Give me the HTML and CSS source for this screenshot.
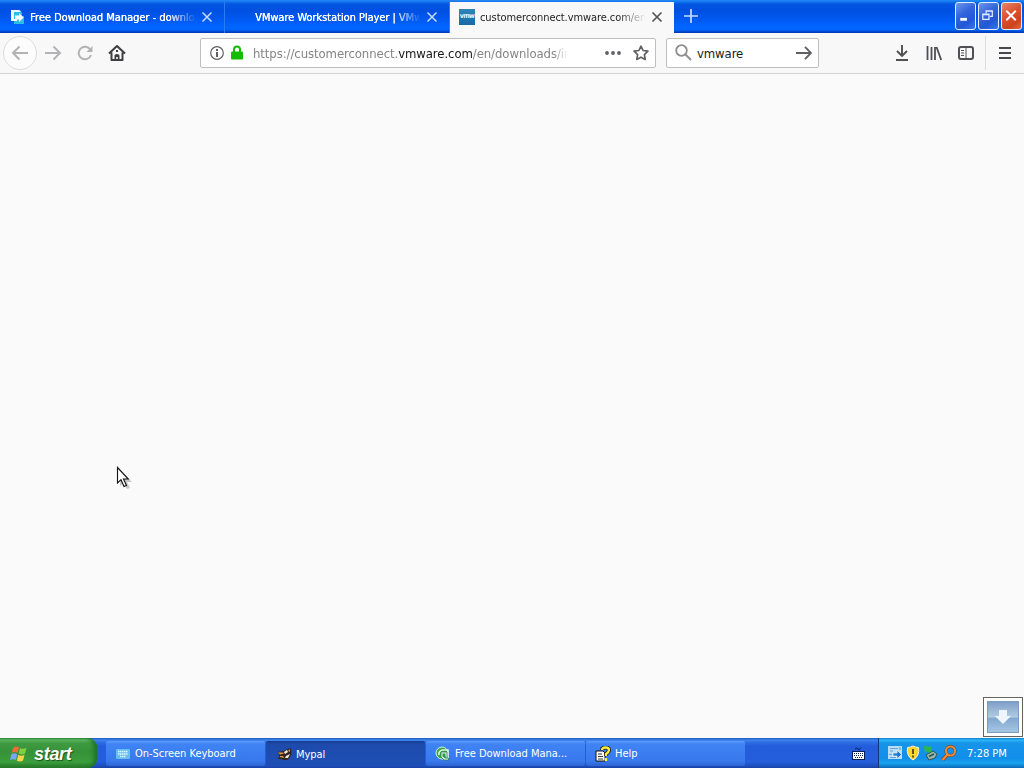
FILE: index.html
```html
<!DOCTYPE html>
<html lang="en">
<head>
<meta charset="utf-8">
<title>customerconnect.vmware.com</title>
<link rel="stylesheet" href="styles.css">
</head>
<body>
<div class="desktop">
  <header class="titlebar">
    <div class="tab">
      <svg class="favicon" width="16" height="16" viewBox="0 0 16 16"><path d="M2 1h9l2 3v3h2v8H5v-3H2z" fill="#2bbfe6"/><path d="M2 1h8l2 2H5v7h3v2H2z" fill="#e9fbff"/><path d="M6 6.500h4V4l4.500 4.500L10 13v-2.500H6z" fill="#fff"/></svg>
      <span class="tab-title t1">Free Download Manager - download</span>
      <svg class="close" width="12" height="12" viewBox="0 0 12 12"><path d="M1.500 1.500l9 9M10.500 1.500l-9 9"/></svg>
    </div>
    <div class="tab">
      <span class="favicon"></span>
      <span class="tab-title t2">VMware Workstation Player | VMware</span>
      <svg class="close" width="12" height="12" viewBox="0 0 12 12"><path d="M1.500 1.500l9 9M10.500 1.500l-9 9"/></svg>
    </div>
    <div class="tab active">
      <span class="favicon vmw">vmw</span>
      <span class="tab-title t3">customerconnect.vmware.com/en/</span>
      <svg class="close" width="12" height="12" viewBox="0 0 12 12"><path d="M1.500 1.500l9 9M10.500 1.500l-9 9"/></svg>
    </div>
    <svg class="newtab" width="14" height="14" viewBox="0 0 14 14"><path d="M7 0v14M0 7h14" stroke="#c5ddff" stroke-width="1.700"/></svg>
    <div class="winbtns">
      <span class="wb"><svg width="20" height="27" viewBox="0 0 20 27"><path d="M4.500 17h7" stroke="#fff" stroke-width="3"/></svg></span>
      <span class="wb"><svg width="20" height="27" viewBox="0 0 20 27" fill="none" stroke="#e4edff" stroke-width="1.300"><path d="M7.500 10.500V8H14v6h-2.500M7.500 8.500H14M4 11.500h6.500V17H4zM4 12h6.500"/></svg></span>
      <span class="wb red"><svg width="20" height="27" viewBox="0 0 20 27"><path d="M4.500 8l10 10M14.500 8l-10 10" stroke="#fff" stroke-width="2"/></svg></span>
    </div>
  </header>

  <nav class="toolbar">
    <span class="back"><svg width="18" height="16" viewBox="0 0 18 16"><path d="M17 8H2M8.500 1.500L2 8l6.500 6.500" fill="none" stroke="#b3b3b5" stroke-width="2"/></svg></span>
    <svg class="fwd" width="18" height="16" viewBox="0 0 18 16"><path d="M1 8h15M9.500 1.500L16 8l-6.500 6.500" fill="none" stroke="#b3b3b5" stroke-width="2"/></svg>
    <svg class="reload" width="16" height="16" viewBox="0 0 16 16"><path d="M13.300 4.500A6.300 6.300 0 1 0 14 10" fill="none" stroke="#b3b3b5" stroke-width="2"/><path d="M15.500 1v6h-6z" fill="#b3b3b5"/></svg>
    <svg class="home" width="18" height="16" viewBox="0 0 18 16"><path d="M1 8.500L9 1l8 7.500M3.500 7.500V15h11V7.500" fill="none" stroke="#3e3e42" stroke-width="2" stroke-linejoin="round"/><path d="M6.500 15v-4.500q0-1.500 2.500-1.500t2.500 1.500V15h-1.700v-3H8.200v3zM8 5h2v2H8z" fill="#3e3e42"/></svg>
    <div class="urlbar">
      <svg class="info" width="14" height="14" viewBox="0 0 14 14"><circle cx="7" cy="7" r="6.300" fill="none" stroke="#606064" stroke-width="1.200"/><path d="M6 3h2v2H6zM6 6h2v5H6z" fill="#606064"/></svg>
      <svg class="lock" width="12" height="15" viewBox="0 0 12 15"><path d="M3 7V4.500a3 3 0 0 1 6 0V7" fill="none" stroke="#12bc00" stroke-width="2"/><rect y="6.500" width="12" height="8" rx="1" fill="#12bc00"/></svg>
      <span class="url">https://customerconnect.<b>vmware.com</b>/en/downloads/in</span>
      <svg class="dots" width="16" height="4" viewBox="0 0 16 4" fill="#606064"><circle cx="2" cy="2" r="1.900"/><circle cx="8" cy="2" r="1.900"/><circle cx="14" cy="2" r="1.900"/></svg>
      <svg class="star" width="16" height="16" viewBox="0 0 16 16"><path d="M8 1.200l2.100 4.300 4.800.7-3.500 3.400.8 4.800L8 12.200l-4.200 2.200.8-4.800L1.100 6.200l4.800-.7z" fill="none" stroke="#606064" stroke-width="1.700" stroke-linejoin="round"/></svg>
    </div>
    <div class="search">
      <svg class="glass" width="17" height="17" viewBox="0 0 17 17"><path d="M10.500 10.500L16 16" stroke="#8e8e91" stroke-width="2"/><circle cx="6.500" cy="6.500" r="5.300" fill="none" stroke="#8e8e91" stroke-width="1.800"/></svg>
      <span class="query">vmware</span>
      <svg width="16" height="14" viewBox="0 0 16 14"><path d="M0 7h15M9 .8L15 7l-6 6.200" fill="none" stroke="#606064" stroke-width="1.900"/></svg>
    </div>
    <div class="tools">
      <svg class="download" width="14" height="16" viewBox="0 0 14 16"><path d="M7 0v11M2 6l5 5 5-5M1 15h12" fill="none" stroke="#505054" stroke-width="1.900"/></svg>
      <svg width="16" height="16" viewBox="0 0 16 16"><path d="M1.500 1v14M5.500 2v13M9 2v13M10.500 2l4.700 13" fill="none" stroke="#505054" stroke-width="1.800"/></svg>
      <svg width="16" height="14" viewBox="0 0 16 14"><rect x="1" y="1" width="14" height="12" rx="2" fill="none" stroke="#505054" stroke-width="2"/><path d="M8 1v12M3 4.500h3M3 7h3M3 9.500h3" stroke="#505054"/></svg>
      <span class="divider"></span>
      <svg width="12" height="12" viewBox="0 0 12 12"><path d="M0 1h12M0 6h12M0 11h12" stroke="#48484c" stroke-width="1.900"/></svg>
    </div>
  </nav>

  <main class="page"></main>

  <footer class="taskbar">
    <div class="start">
      <svg width="19" height="18" viewBox="0 0 19 18"><path d="M3 3q3-2.500 6-.5L7.500 8q-3-2-6 .2z" fill="#ee6a38"/><path d="M10 3q3 1.800 6.500-.2L15 8.500q-3 2-6.300 0z" fill="#80cf42"/><path d="M1.200 9.500q3-2.500 6-.3L5.800 15q-3-1.800-5.800.2z" fill="#79a5f5"/><path d="M8.300 9.700q3 2 6.300 0L13 15.500q-3 2-6.200 0z" fill="#fbd449"/></svg>
      <span class="start-label">start</span>
    </div>
    <div class="tasks">
      <div class="task"><svg width="16" height="16" viewBox="0 0 16 16"><rect x="1" y="3" width="14" height="10" rx="1" fill="#65bdf5"/><path d="M3 5.500h10M3 8h10M5 10.500h6" stroke="#e2faff" stroke-width="1.500" stroke-dasharray="1.500 .5"/></svg><span class="k1">On-Screen Keyboard</span></div>
      <div class="task pressed"><svg width="16" height="16" viewBox="0 0 16 16"><path d="M1 6l5-1 3-1 4-2 1 1 .5 5-2 4-2 2-4 0-3-1-3 0 2-2z" fill="#35261f"/><path d="M1 6.500l5 0 1 1-4 1zM3 10h3l1 2-4-1z" fill="#d99750"/><path d="M7 6l3-2 1 2-3 2zM9 10l4-2-2 4-3 0z" fill="#f4eee1"/><path d="M11 5l2-2v3z" fill="#d99750"/></svg><span class="k2">Mypal</span></div>
      <div class="task"><svg width="16" height="16" viewBox="0 0 16 16"><circle cx="7" cy="7" r="6" fill="#3bab43" stroke="#d3efe0"/><path d="M4 9a4 4 0 0 1 4-5h5v8" fill="none" stroke="#e4f5ea" stroke-width="1.600"/><path d="M6 6h6v5l2 3H9l-3-3z" fill="#e7f4ee" stroke="#258345" stroke-width=".8"/><path d="M7.500 7.500h3v3l2 2H10l-2.500-2z" fill="#289a48"/></svg><span class="k3">Free Download Mana...</span></div>
      <div class="task"><svg width="16" height="16" viewBox="0 0 16 16"><path d="M1 5h7l2 2v8H1z" fill="#fff" stroke="#111"/><path d="M3 8h4M3 10.500h5M3 13h5" stroke="#333"/><path d="M7 4q0-2.500 3.500-2.500T14 4q0 2-3 4v2" fill="none" stroke="#222" stroke-width="4"/><path d="M7 4q0-2.500 3.500-2.500T14 4q0 2-3 4v2M11 12v3" fill="none" stroke="#ffed41" stroke-width="2.300"/></svg><span class="k4">Help</span></div>
    </div>
    <svg class="osk" width="13" height="13" viewBox="0 0 13 13"><path d="M3 2q2-2 3 0t3-1.500" fill="none" stroke="#071d55"/><rect x=".5" y="4.500" width="12" height="8" fill="#fff" stroke="#071d55"/><path d="M2 6.500h9M2 8.500h9M3 10.500h7" stroke="#071d55" stroke-dasharray="1 1"/></svg>
    <div class="tray">
      <svg width="16" height="16" viewBox="0 0 16 16"><path d="M1 1h14v13H1z" fill="#b9ddf7"/><path d="M3 3.500h8M3 6h3M2 9.500h3M3 12.500h6M13 2v3" stroke="#6aa4df" stroke-width="1.200"/><path d="M6 8h4V5l4.500 4.500L10 14v-3H6z" fill="#2873cb" stroke="#e7f6ff" stroke-width=".7"/></svg>
      <svg width="14" height="16" viewBox="0 0 14 16"><path d="M7 1q3 1.500 5.500 1.500Q14 11 7 15 0 11 1.500 2.500 4 2.500 7 1z" fill="#f9d630" stroke="#fff4bd"/><path d="M7 4v5M7 10.500v2" stroke="#4c4010" stroke-width="1.700"/></svg>
      <svg width="15" height="16" viewBox="0 0 15 16"><path d="M1 1l8 1-1 3 2 3-3 1-3-3-2 2z" fill="#2bb844"/><path d="M3 10l7-4 4 3-2 4-6 2z" fill="#9fb4ab" stroke="#2d5655"/><path d="M6 11.500l5-2.500" stroke="#1b584c" stroke-width="1.500"/></svg>
      <svg width="16" height="16" viewBox="0 0 16 16"><circle cx="9.500" cy="6" r="4.500" fill="none" stroke="#713a1a" stroke-width="3"/><path d="M6.500 9.500L1.500 15" stroke="#713a1a" stroke-width="3.500"/><circle cx="9.500" cy="6" r="4.500" fill="none" stroke="#ee8930" stroke-width="2.200"/><path d="M6.500 9.500L1.500 15" stroke="#ee8930" stroke-width="2.500"/></svg>
      <span class="clock">7:28 PM</span>
    </div>
  </footer>

  <div class="floater"><div class="tile"><svg width="18" height="18" viewBox="0 0 18 18"><path d="M5 2h8v6h4l-8 8-8-8h4z" fill="#edf6fd"/></svg></div></div>
  <svg class="cursor" width="20" height="26" viewBox="0 0 20 26"><path d="M4 4v16l4-3 3 6 3-1-3-6h5z" fill="#777" opacity=".4"/><path d="M1.500 1.500v15.500l3.500-3.300 3 6.800 2.500-1.100-3-6.400h4.800z" fill="#fff" stroke="#111" stroke-width="1.100"/></svg>
</div>
</body>
</html>
```

FILE: styles.css
```css
* { box-sizing: border-box; }
body { margin: 0; font-family: "DejaVu Sans Condensed", "DejaVu Sans", sans-serif; font-stretch: condensed; }
svg { display: block; flex: none; }
.desktop { position: relative; width: 1024px; height: 768px; display: flex; flex-direction: column; background: #fafafa; overflow: hidden; }

.titlebar { height: 33px; display: flex; align-items: stretch; background: linear-gradient(#2289f4 0, #1b80f4 1px, #0256e0 4px, #0050e1 10px, #0058ef 19px, #0064ff 26px, #0064fc 30px, #0141c1 32px, #003ab2 33px); }
.tab { width: 225px; padding: 1px 11px 0 9px; display: flex; align-items: center; border-right: 1px solid #2a7cf1; color: #fff; }
.favicon { width: 16px; height: 16px; flex: none; }
.tab-title { width: 166px; margin-left: 5px; font-size: 11px; white-space: nowrap; overflow: hidden; -webkit-mask-image: linear-gradient(90deg, #000 138px, transparent 166px); }
.t1, .t2 { text-shadow: .3px 0 #fff; }
.t1 { letter-spacing: -.02px; }
.t2 { letter-spacing: -.05px; }
.t3 { letter-spacing: -.08px; }
.close { margin-left: 6px; stroke: #c7dcff; stroke-width: 1.5; fill: none; }
.tab.active { width: 224px; margin-top: 2px; padding-top: 0; padding-bottom: 1px; background: #f8f8f9; color: #222; border: 0; }
.active .close { stroke: #555; stroke-width: 1.7; }
.vmw { background: linear-gradient(#2d86b9, #1769a4); color: #e9f4fb; font-size: 7px; line-height: 15px; text-align: center; font-weight: bold; letter-spacing: -.7px; }
.newtab { margin: 9px 0 0 10px; }
.winbtns { margin: 2px 2px 0 auto; display: flex; gap: 2px; }
.wb { width: 21px; height: 28px; border: 1px solid #e5efff; border-radius: 3px; background: linear-gradient(145deg, #7295ed, #3264db 40%, #2258d5 70%, #3675ef); }
.wb svg { width: 19px; height: 26px; }
.red { background: linear-gradient(145deg, #e5866c, #dc5531 40%, #ce421e 75%, #e56541); }

.toolbar { height: 41px; display: flex; align-items: center; border-bottom: 1px solid #d5d5d6; background: #f8f8f9; padding: 0 0 1px 3px; }
.back { width: 34px; height: 34px; border: 1px solid #dcdcdd; border-radius: 50%; display: grid; place-items: center; background: #fcfcfc; }
.fwd { margin-left: 7px; }
.reload { margin-left: 15px; }
.home { margin-left: 15px; }
.urlbar { width: 456px; height: 30px; margin-left: 74px; padding: 0 6px 0 9px; display: flex; align-items: center; border: 1px solid #bfbfc0; border-radius: 2px; background: #fff; }
.lock { margin-left: 7px; }
.url { width: 313px; margin-left: 10px; padding-top: 1px; overflow: hidden; white-space: nowrap; font-size: 13px; letter-spacing: -.08px; color: #858587; -webkit-mask-image: linear-gradient(90deg, #000 300px, transparent 315px); }
.url b { font-weight: normal; color: #161616; }
.dots { margin-left: 39px; }
.star { margin-left: auto; }
.search { width: 153px; height: 30px; margin-left: 10px; padding: 0 6px 0 8px; display: flex; align-items: center; border: 1px solid #bfbfc0; border-radius: 2px; background: #fff; }
.query { flex: 1; margin-left: 5px; padding-top: 1px; font-size: 13px; letter-spacing: -.1px; color: #222; }
.tools { flex: 1; height: 100%; display: flex; align-items: center; justify-content: flex-end; gap: 16px; padding-right: 13px; }
.download { margin-right: 1px; }
.divider { width: 1px; height: 34px; background: #dedee0; margin: 0 -3px 0 -5px; }
.page { flex: 1; background: #fafafa; }

.taskbar { height: 30px; display: flex; color: #fff; background: linear-gradient(#1f55b8 0, #3c86ee 2px, #2f70e4 4px, #235ddb 8px, #245edb 24px, #1d4fbd 28px, #1941a5); }
.start { width: 97px; padding: 1px 0 0 10px; display: flex; align-items: center; gap: 5px; border-radius: 0 9px 9px 0; background: linear-gradient(#35863a 0, #5cb75f 2px, #3f9a43 5px, #369237 14px, #3c9e3d 24px, #287c2b 29px); box-shadow: inset -5px 0 5px -2px #1c6f29; }
.start-label { font: italic bold 18px/20px "Liberation Sans", sans-serif; letter-spacing: -.3px; text-shadow: 1px 1px 1px #1d5323; }
.tasks { margin: 3px 0 0 9px; display: flex; gap: 1px; }
.task { width: 159px; height: 25px; padding: 0 9px; display: flex; align-items: center; gap: 4px; border-radius: 2px; background: linear-gradient(#629bfb, #3f83f4 3px, #3879ed 20px, #2d65d2); font-size: 11px; letter-spacing: -.03px; white-space: nowrap; }
.pressed { padding-left: 11px; padding-top: 1px; gap: 3px; background: linear-gradient(#173a8b, #1c4bac 3px, #1e4fb5); }
.osk { margin: 9px 0 0 auto; }
.tray { width: 146px; margin-left: 13px; padding: 0 0 0 8px; display: flex; align-items: center; gap: 3px; border-left: 1px solid #0e347d; background: linear-gradient(#107fcc 0, #2bb6f5 2px, #1794e9 5px, #118eea 20px, #19a3ee 25px, #0c68bb); }
.clock { margin-left: 7px; font-size: 11px; white-space: nowrap; }

.floater { position: absolute; left: 983px; top: 697px; width: 40px; height: 40px; padding: 3px; border: 1px solid #67625c; background: #fff; }
.tile { width: 32px; height: 32px; display: grid; place-items: center; border: 1px solid #7b9cbf; background: linear-gradient(#809fc8, #b0cbe3 50%, #83a8d0 55%, #a5c7e4); }
.cursor { position: absolute; left: 116px; top: 466px; }
```
